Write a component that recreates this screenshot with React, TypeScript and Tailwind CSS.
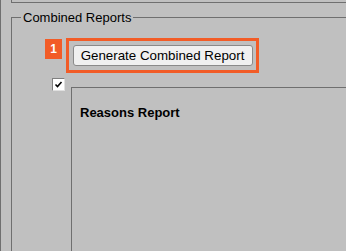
export default function App() {
  return (
    <div className="h-[251px] w-[346px] overflow-hidden bg-[#c0c0c0] font-['Liberation_Sans',Arial,sans-serif] text-black">
      <div className="h-full w-[420px] border-l border-[#6f6f6f]">
        {/* tail of the previous group box */}
        <div className="ml-[10px] h-[3px] border-l border-b border-[#6f6f6f]" />

        {/* Combined Reports group */}
        <fieldset className="ml-[10px] mt-[7px] h-[300px] border-l border-t border-[#6f6f6f] pl-[9px]">
          <legend className="px-[2px] text-[13px] leading-[15px]">Combined Reports</legend>

          <div className="ml-[24px] mt-[13px] flex flex-col">
            <div className="flex items-start gap-[4px]">
              <span className="mt-[1px] flex h-[20px] w-[17px] items-center justify-center bg-[#f25c27] text-[12px] font-bold text-white">
                1
              </span>
              <div className="flex h-[35px] w-[193px] items-center justify-center border-[3px] border-[#f25c27]">
                <button className="h-[21px] w-[180px] rounded-[3px] border border-[#8a8a8a] bg-[#f0f0f0] text-[13.33px] leading-none text-black">
                  Generate Combined Report
                </button>
              </div>
            </div>

            <div className="mt-[5px] flex items-start">
              <span className="ml-[7px] flex h-[13px] w-[13px] items-center justify-center border border-[#808080] border-b-[#e0e0e0] border-r-[#e0e0e0] bg-white">
                <svg width="9" height="9" viewBox="0 0 9 9">
                  <path d="M1.5 4.5 L3.5 6.5 L7.5 2" fill="none" stroke="#000" strokeWidth="1.6" />
                </svg>
              </span>
              <div className="ml-[6px] mt-[9px] h-[200px] flex-1 border-l border-t border-[#6f6f6f] pl-[8px] pt-[17px]">
                <p className="text-[13px] font-bold leading-[15px]">Reasons Report</p>
              </div>
            </div>
          </div>
        </fieldset>
      </div>
    </div>
  )
}
